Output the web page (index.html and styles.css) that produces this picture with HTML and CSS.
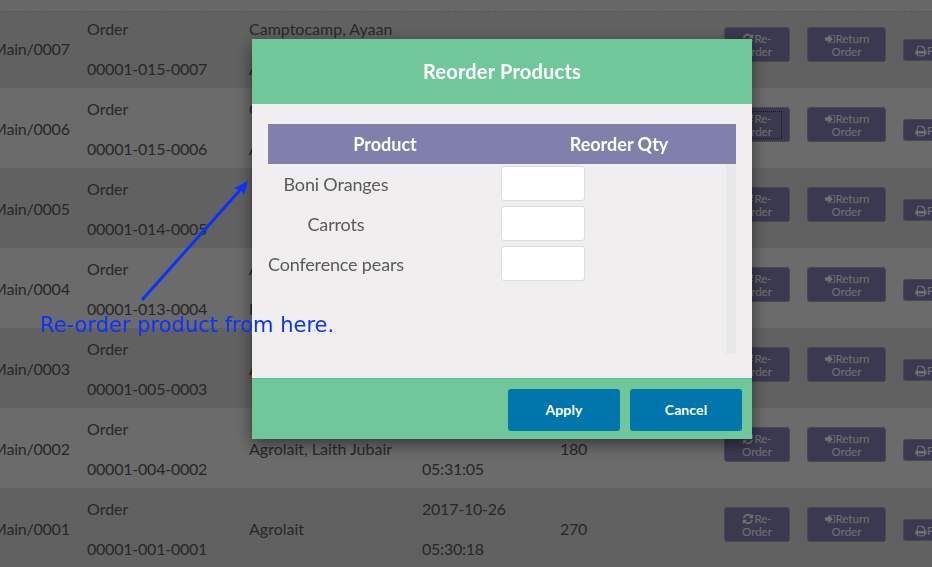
FILE: index.html
```html
<!DOCTYPE html>
<html lang="en">
<head>
    <meta charset="UTF-8">
    <meta name="viewport" content="width=device-width, initial-scale=1.0">
    <title>Reorder Products</title>
    <link rel="stylesheet" href="styles.css">
</head>
<body>
    <svg class="icon-defs" aria-hidden="true">
        <symbol id="i-refresh" viewBox="0 0 1792 1792"><path d="M1639 1056q0 5-1 7-64 268-268 434.500t-478 166.500q-146 0-282.500-55t-252.500-157l-129 129q-19 19-45 19t-45-19-19-45v-448q0-26 19-45t45-19h448q26 0 45 19t19 45-19 45l-137 137q71 66 161 102t187 36q134 0 250-65t186-179q11-17 53-117 8-23 30-23h192q13 0 22.500 9.500t9.500 22.500zm25-800v448q0 26-19 45t-45 19h-448q-26 0-45-19t-19-45 19-45l138-138q-148-137-349-137-134 0-250 65t-186 179q-11 17-53 117-8 23-30 23h-199q-13 0-22.500-9.500t-9.500-22.500v-7q65-268 270-434.500t480-166.500q146 0 284 55.500t245 156.500l130-129q19-19 45-19t45 19 19 45z"/></symbol>
        <symbol id="i-return" viewBox="0 0 1792 1792"><path d="M1312 896q0 26-19 45l-544 544q-19 19-45 19t-45-19-19-45v-288h-448q-26 0-45-19t-19-45v-384q0-26 19-45t45-19h448v-288q0-26 19-45t45-19 45 19l544 544q19 19 19 45zm352-352v704q0 119-84.500 203.500t-203.500 84.500h-320q-13 0-22.500-9.500t-9.500-22.500q0-4-1-20t-.5-26.500 3-23.500 10-19.500 20.500-6.500h320q66 0 113-47t47-113v-704q0-66-47-113t-113-47h-288-11-13t-11.500-1-11.500-3-8-5.500-7-9-2-13.500q0-4-1-20t-.5-26.500 3-23.500 10-19.500 20.500-6.500h320q119 0 203.500 84.500t84.500 203.500z"/></symbol>
        <symbol id="i-print" viewBox="0 0 1792 1792"><path d="M448 1536h896v-256h-896v256zm0-640h896v-384h-160q-40 0-68-28t-28-68v-160h-640v640zm1152 64q0-26-19-45t-45-19-45 19-19 45 19 45 45 19 45-19 19-45zm128 0v416q0 13-9.500 22.500t-22.500 9.500h-224v160q0 40-28 68t-68 28h-960q-40 0-68-28t-28-68v-160h-224q-13 0-22.500-9.500t-9.500-22.500v-416q0-79 56.500-135.500t135.500-56.500h64v-544q0-40 28-68t68-28h672q40 0 88 20t76 48l152 152q28 28 48 76t20 88v256h64q79 0 135.500 56.500t56.500 135.500z"/></symbol>
    </svg>

    <main class="orders">
        <div class="row">
            <div class="num">Main/0007</div>
            <div>Order<br><br><span class="num">00001-015-0007</span></div>
            <div>Camptocamp, Ayaan<br><br>Agrolait</div>
            <div class="num">2017-10-26</div>
            <div></div>
            <div class="actions">
                <a class="btn btn-reorder"><svg class="icon"><use href="#i-refresh"/></svg>Re-Order</a>
                <a class="btn btn-return"><svg class="icon"><use href="#i-return"/></svg>Return Order</a>
                <a class="btn btn-print"><svg class="icon"><use href="#i-print"/></svg>Print</a>
            </div>
        </div>
        <div class="row">
            <div class="num">Main/0006</div>
            <div>Order<br><br><span class="num">00001-015-0006</span></div>
            <div>Camptocamp<br><br>Agrolait</div>
            <div class="num">2017-10-26</div>
            <div></div>
            <div class="actions">
                <a class="btn btn-reorder"><span class="focused"><svg class="icon"><use href="#i-refresh"/></svg>Re-Order</span></a>
                <a class="btn btn-return"><svg class="icon"><use href="#i-return"/></svg>Return Order</a>
                <a class="btn btn-print"><svg class="icon"><use href="#i-print"/></svg>Print</a>
            </div>
        </div>
        <div class="row">
            <div class="num">Main/0005</div>
            <div>Order<br><br><span class="num">00001-014-0005</span></div>
            <div></div>
            <div class="num">2017-10-26</div>
            <div></div>
            <div class="actions">
                <a class="btn btn-reorder"><svg class="icon"><use href="#i-refresh"/></svg>Re-Order</a>
                <a class="btn btn-return"><svg class="icon"><use href="#i-return"/></svg>Return Order</a>
                <a class="btn btn-print"><svg class="icon"><use href="#i-print"/></svg>Print</a>
            </div>
        </div>
        <div class="row">
            <div class="num">Main/0004</div>
            <div>Order<br><br><span class="num">00001-013-0004</span></div>
            <div>Agrolait<br><br>I</div>
            <div class="num">2017-10-26</div>
            <div></div>
            <div class="actions">
                <a class="btn btn-reorder"><svg class="icon"><use href="#i-refresh"/></svg>Re-Order</a>
                <a class="btn btn-return"><svg class="icon"><use href="#i-return"/></svg>Return Order</a>
                <a class="btn btn-print"><svg class="icon"><use href="#i-print"/></svg>Print</a>
            </div>
        </div>
        <div class="row">
            <div class="num">Main/0003</div>
            <div>Order<br><br><span class="num">00001-005-0003</span></div>
            <div>Agrolait</div>
            <div class="num">2017-10-26</div>
            <div></div>
            <div class="actions">
                <a class="btn btn-reorder"><svg class="icon"><use href="#i-refresh"/></svg>Re-Order</a>
                <a class="btn btn-return"><svg class="icon"><use href="#i-return"/></svg>Return Order</a>
                <a class="btn btn-print"><svg class="icon"><use href="#i-print"/></svg>Print</a>
            </div>
        </div>
        <div class="row">
            <div class="num">Main/0002</div>
            <div>Order<br><br><span class="num">00001-004-0002</span></div>
            <div>Agrolait, Laith Jubair</div>
            <div class="num">2017-10-26<br><br>05:31:05</div>
            <div class="num">180</div>
            <div class="actions">
                <a class="btn btn-reorder"><svg class="icon"><use href="#i-refresh"/></svg>Re-Order</a>
                <a class="btn btn-return"><svg class="icon"><use href="#i-return"/></svg>Return Order</a>
                <a class="btn btn-print"><svg class="icon"><use href="#i-print"/></svg>Print</a>
            </div>
        </div>
        <div class="row">
            <div class="num">Main/0001</div>
            <div>Order<br><br><span class="num">00001-001-0001</span></div>
            <div>Agrolait</div>
            <div class="num">2017-10-26<br><br>05:30:18</div>
            <div class="num">270</div>
            <div class="actions">
                <a class="btn btn-reorder"><svg class="icon"><use href="#i-refresh"/></svg>Re-Order</a>
                <a class="btn btn-return"><svg class="icon"><use href="#i-return"/></svg>Return Order</a>
                <a class="btn btn-print"><svg class="icon"><use href="#i-print"/></svg>Print</a>
            </div>
        </div>
    </main>

    <div class="backdrop"></div>

    <section class="modal">
        <header class="modal-head">Reorder Products</header>
        <div class="modal-body">
            <div class="product-head">
                <div>Product</div>
                <div>Reorder Qty</div>
            </div>
            <div class="product-list">
                <div class="product-name">Boni Oranges</div>
                <input type="text" class="qty">
                <div class="product-name">Carrots</div>
                <input type="text" class="qty">
                <div class="product-name">Conference pears</div>
                <input type="text" class="qty">
            </div>
        </div>
        <footer class="modal-foot">
            <button class="modal-btn">Apply</button>
            <button class="modal-btn">Cancel</button>
        </footer>
    </section>

    <!-- annotation drawn over the screen -->
    <svg class="arrow" viewBox="0 0 932 567" aria-hidden="true">
        <line x1="142" y1="300" x2="241" y2="189"/>
        <polygon points="248,181 234,188.500 241,190 244,195"/>
    </svg>
    <div class="note">Re-order product from here.</div>
</body>
</html>
```

FILE: styles.css
```css
html, body{
    margin: 0;
    height: 100%;
    overflow: hidden;
}

body{
    font-family: Lato, "Open Sans", sans-serif;
    font-size: 16px;
    color: #5a5a5a;
    background-color: #ebebeb;
}

.icon-defs{
    display: none;
}

/* orders table behind the dialog */
.orders{
    margin-left: -8px;
    padding-top: 11px;
}

.orders .row:first-child{
    height: 77px;
    padding-top: 1px;
    padding-bottom: 3px;
    border-top: 1px dashed #c4c4c4;
}

.row{
    box-sizing: border-box;
    height: 80px;
    padding-top: 2px;
    display: grid;
    grid-template-columns: 95px 162px 173px 138px 164px 1fr;
    align-items: center;
    line-height: 20px;
    white-space: nowrap;
}

.row:nth-child(odd){
    background-color: #dddddd;
}

.row:nth-child(even){
    background-color: #f3f3f3;
}

.num{
    letter-spacing: -0.22px;
}

.actions{
    display: flex;
    align-items: flex-start;
    padding-bottom: 9px;
}

.btn{
    box-sizing: border-box;
    display: block;
    padding: 3.5px 8px;
    font-size: 11.500px;
    line-height: 13px;
    text-align: center;
    white-space: normal;
    color: #ffffff;
    background-color: #8482b4;
    border: 1px solid #a5a5b5;
    border-radius: 3px;
}

.btn-reorder{
    width: 66px;
    margin-right: 17px;
}

.btn-return{
    width: 79px;
    margin-right: 17px;
}

.btn-print{
    width: 60px;
    flex: none;
    margin-top: 12px;
}

.icon{
    width: 12px;
    height: 12px;
    vertical-align: -2px;
    fill: #ffffff;
}

.focused{
    display: block;
    outline: 1px dotted #333333;
}

.backdrop{
    position: fixed;
    inset: 0;
    background-color: rgba(0, 0, 0, 0.56);
}

/* dialog */
.modal{
    position: fixed;
    left: 252px;
    top: 39px;
    width: 500px;
    height: 400px;
    display: flex;
    flex-direction: column;
    background-color: #f0eeef;
    box-shadow: 0 5px 15px rgba(0, 0, 0, 0.5);
}

.modal-head{
    box-sizing: border-box;
    height: 65px;
    padding-bottom: 2px;
    display: flex;
    align-items: center;
    justify-content: center;
    flex: none;
    font-size: 20px;
    font-weight: bold;
    letter-spacing: 0.2px;
    color: white;
    background-color: #6fc79a;
}

.modal-body{
    flex: 1;
    min-height: 0;
    display: flex;
    flex-direction: column;
    padding: 20px 16px 24px;
}

.product-head{
    height: 40px;
    flex: none;
    display: grid;
    grid-template-columns: 1fr 1fr;
    align-items: center;
    text-align: center;
    font-size: 18px;
    font-weight: bold;
    color: white;
    background-color: #8180ac;
}

.product-list{
    flex: 1;
    overflow-y: auto;
    display: grid;
    grid-template-columns: max-content 84px;
    grid-auto-rows: 40px;
    column-gap: 97px;
    align-items: center;
    align-content: start;
    font-size: 18px;
    letter-spacing: -0.17px;
    border-right: 10px solid #e8e8e8;
}

.product-name{
    text-align: center;
}

.qty{
    box-sizing: border-box;
    width: 84px;
    height: 35px;
    margin-bottom: 1px;
    background-color: white;
    border: 1px solid #dddddd;
    border-radius: 3px;
}

.modal-foot{
    height: 61px;
    box-sizing: border-box;
    flex: none;
    display: flex;
    justify-content: flex-end;
    gap: 10px;
    padding: 10px 10px 0;
    background-color: #6fc79a;
    border-top: 1px solid #63b98e;
}

.modal-btn{
    width: 112px;
    height: 42px;
    padding-bottom: 3px;
    font-family: Lato, sans-serif;
    font-size: 14px;
    font-weight: bold;
    letter-spacing: 0.1px;
    color: white;
    background-color: #0076ad;
    border: none;
    border-radius: 3px;
}

/* annotation */
.arrow{
    position: fixed;
    inset: 0;
    width: 932px;
    height: 567px;
}

.arrow line{
    stroke: #0a32ff;
    stroke-width: 3;
}

.arrow polygon{
    fill: #0a32ff;
}

.note{
    position: fixed;
    left: 40px;
    top: 313px;
    font-family: "DejaVu Sans", sans-serif;
    font-size: 21px;
    line-height: 24px;
    color: #0a32ff;
    white-space: nowrap;
}
```
